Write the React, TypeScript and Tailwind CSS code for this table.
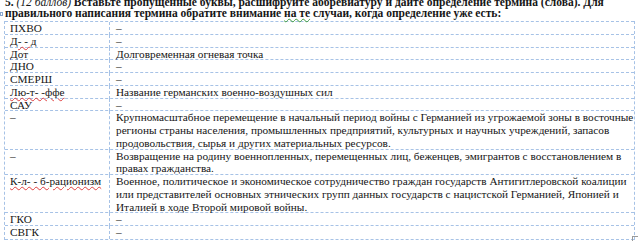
const rows: { term: string; def: string[]; wavy?: boolean }[] = [
  { term: "ПХВО", def: ["–"] },
  { term: "Д- - д", def: ["–"], wavy: true },
  { term: "Дот", def: ["Долговременная огневая точка"] },
  { term: "ДНО", def: ["–"] },
  { term: "СМЕРШ", def: ["–"] },
  { term: "Лю-т- -ффе", def: ["Название германских военно-воздушных сил"], wavy: true },
  { term: "САУ", def: ["–"] },
  {
    term: "–",
    def: [
      "Крупномасштабное перемещение в начальный период войны с Германией из угрожаемой зоны в восточные",
      "регионы страны населения, промышленных предприятий, культурных и научных учреждений, запасов",
      "продовольствия, сырья и других материальных ресурсов.",
    ],
  },
  {
    term: "–",
    def: [
      "Возвращение на родину военнопленных, перемещенных лиц, беженцев, эмигрантов с восстановлением в",
      "правах гражданства.",
    ],
  },
  {
    term: "К-л- - б-рационизм",
    def: [
      "Военное, политическое и экономическое сотрудничество граждан государств Антигитлеровской коалиции",
      "или представителей основных этнических групп данных государств с нацистской Германией, Японией и",
      "Италией в ходе Второй мировой войны.",
    ],
    wavy: true,
  },
  { term: "ГКО", def: ["–"] },
  { term: "СВГК", def: ["–"] },
];

export default function App() {
  return (
    <div className="relative w-[640px] h-[241px] overflow-hidden bg-white text-[#161616] font-['Liberation_Serif',serif]">
      {/* Heading, first line is cut off at the top */}
      <div className="h-[21px] -mt-[3px] pl-[5px] text-[11.5px] leading-[11px] font-bold whitespace-nowrap">
        <div>
          5. <span className="italic font-normal">(12 баллов)</span> Вставьте пропущенные буквы, расшифруйте аббревиатуру и дайте определение термина (слова). Для
        </div>
        <div>
          правильного написания термина обратите внимание{" "}
          <span className="underline decoration-wavy decoration-[#3c9a3c] decoration-1">на те</span> случаи, когда определение уже есть:
        </div>
      </div>

      {/* table move handle */}
      <div className="absolute left-0 top-[12px] w-[3px] h-[4px] border border-[#8aa8d0] bg-white" />

      <div className="mt-[3px] ml-[4px] w-[631px] border-l border-r border-dashed border-[#a6c2e6] text-[11.25px]">
        {rows.map((r, i) => (
          <div
            key={i}
            className="flex border-t border-dashed border-[#a6c2e6] -mt-px first:mt-0"
          >
            <div className="w-[105px] shrink-0 pl-[5px] leading-[12.75px] border-r border-dashed border-[#a6c2e6]">
              {r.wavy ? (
                <span className="underline decoration-wavy decoration-[#e04040] decoration-1">{r.term}</span>
              ) : (
                r.term
              )}
            </div>
            <div className="flex-1 pl-[6px] leading-[12.75px] whitespace-nowrap">
              {r.def.map((l, j) => (
                <div key={j}>{l}</div>
              ))}
            </div>
          </div>
        ))}
        <div className="border-t border-dashed border-[#a6c2e6]" />
      </div>

      {/* resize handle */}
      <div className="absolute left-[632px] top-[236px] w-[6px] h-[6px] border-l border-t border-[#9a9a9a]" />
    </div>
  );
}
